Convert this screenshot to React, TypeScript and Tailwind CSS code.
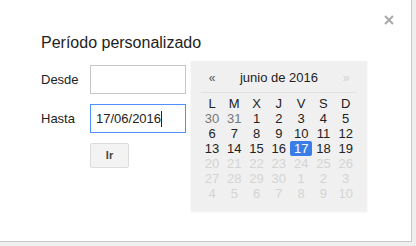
import React from "react";

const weeks: { d: number; t: "prev" | "cur" | "dis" | "sel" }[][] = [
  [
    { d: 30, t: "prev" }, { d: 31, t: "prev" }, { d: 1, t: "cur" }, { d: 2, t: "cur" }, { d: 3, t: "cur" }, { d: 4, t: "cur" }, { d: 5, t: "cur" },
  ],
  [
    { d: 6, t: "cur" }, { d: 7, t: "cur" }, { d: 8, t: "cur" }, { d: 9, t: "cur" }, { d: 10, t: "cur" }, { d: 11, t: "cur" }, { d: 12, t: "cur" },
  ],
  [
    { d: 13, t: "cur" }, { d: 14, t: "cur" }, { d: 15, t: "cur" }, { d: 16, t: "cur" }, { d: 17, t: "sel" }, { d: 18, t: "cur" }, { d: 19, t: "cur" },
  ],
  [20, 21, 22, 23, 24, 25, 26].map((d) => ({ d, t: "dis" as const })),
  [27, 28, 29, 30, 1, 2, 3].map((d) => ({ d, t: "dis" as const })),
  [4, 5, 6, 7, 8, 9, 10].map((d) => ({ d, t: "dis" as const })),
];

const heads = ["L", "M", "X", "J", "V", "S", "D"];

function cellClass(t: string) {
  if (t === "prev") return "text-[#777]";
  if (t === "dis") return "text-[#d4d4d4]";
  if (t === "sel") return "bg-[#3b7de6] text-white rounded-[2px]";
  return "text-[#222]";
}

export default function App() {
  return (
    <div
      className="w-[416px] h-[246px] bg-[#efefef] overflow-hidden"
      style={{ fontFamily: '"Liberation Sans", Arial, sans-serif' }}
    >
      <div className="relative w-[412px] h-[242px] bg-white border-r border-b border-[#c8c8c8]">
        <div className="absolute top-[15px] left-[384px]">
          <svg width="10" height="10" viewBox="0 0 10 10">
            <path d="M1 1 L9 9 M9 1 L1 9" stroke="#a8a8a8" strokeWidth="2" />
          </svg>
        </div>
        <div className="pt-[33px] pl-[41px] flex flex-col">
          <div className="text-[16px] leading-[20px] text-[#222]">Período personalizado</div>
          <div className="mt-[12px] flex items-center h-[29px]">
            <div className="w-[49px] text-[13px] text-[#222]">Desde</div>
            <div className="w-[96px] h-[29px] border border-[#c6c6c6] bg-white" />
          </div>
          <div className="mt-[10px] flex items-center h-[29px]">
            <div className="w-[49px] text-[13px] text-[#222]">Hasta</div>
            <div className="w-[96px] h-[29px] border border-[#4d90fe] bg-white flex items-center pl-[5px] text-[13px] text-[#222]">
              <span>17/06/2016</span>
              <span className="w-px h-[16px] bg-[#222]" />
            </div>
          </div>
          <div className="mt-[10px] ml-[49px]">
            <button className="w-[39px] h-[25px] bg-[#f3f3f3] border border-[#dcdcdc] rounded-[2px] text-[11px] font-bold text-[#444] flex items-center justify-center">
              Ir
            </button>
          </div>
        </div>

        <div className="absolute left-[191px] top-[61px] w-[176px] h-[150px] bg-[#f0f0f0] shadow-[0_1px_2px_rgba(0,0,0,0.08)] px-[10px]">
          <div className="h-[32px] flex items-center justify-between border-b border-[#e2e2e2] text-[13px] pt-[2px]">
            <span className="w-[22px] text-center text-[#555] text-[12px]">«</span>
            <span className="text-[#222]">junio de 2016</span>
            <span className="w-[22px] text-center text-[#d0d0d0] text-[12px]">»</span>
          </div>
          <div className="mt-[3px] grid grid-cols-7 text-[13px] leading-[15px]">
            {heads.map((h) => (
              <div key={h} className="h-[15px] w-[22px] text-center text-[#222]">{h}</div>
            ))}
            {weeks.flat().map((c, i) => (
              <div key={i} className={"h-[15px] w-[22px] text-center " + cellClass(c.t)}>
                {c.d}
              </div>
            ))}
          </div>
        </div>
      </div>
    </div>
  );
}
